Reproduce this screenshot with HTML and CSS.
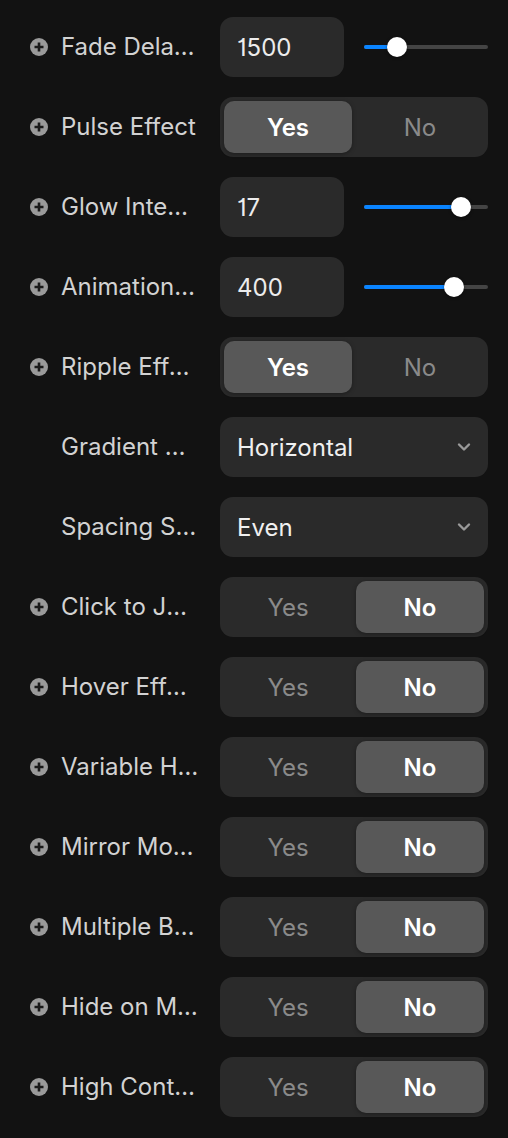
FILE: index.html
```html
<!DOCTYPE html>
<html>
<head>
<meta charset="utf-8">
<link rel="stylesheet" href="styles.css">
</head>
<body>
<div class="panel">
  <div class="row">
    <span class="add"><svg viewBox="0 0 18 18"><circle cx="9" cy="9" r="9" fill="#9a9a9a"/><path d="M9 4.5v9M4.5 9h9" stroke="#1a1a1a" stroke-width="2.6"/></svg></span>
    <span class="label">Fade Delay (ms)</span>
    <div class="ctrl num-slider">
      <div class="input">1500</div>
      <div class="slider"><div class="fill" style="width:33px"></div><div class="thumb" style="left:33px"></div></div>
    </div>
  </div>
  <div class="row">
    <span class="add"><svg viewBox="0 0 18 18"><circle cx="9" cy="9" r="9" fill="#9a9a9a"/><path d="M9 4.5v9M4.5 9h9" stroke="#1a1a1a" stroke-width="2.6"/></svg></span>
    <span class="label">Pulse Effect</span>
    <div class="ctrl toggle"><span class="seg on">Yes</span><span class="seg">No</span></div>
  </div>
  <div class="row">
    <span class="add"><svg viewBox="0 0 18 18"><circle cx="9" cy="9" r="9" fill="#9a9a9a"/><path d="M9 4.5v9M4.5 9h9" stroke="#1a1a1a" stroke-width="2.6"/></svg></span>
    <span class="label">Glow Intensity</span>
    <div class="ctrl num-slider">
      <div class="input">17</div>
      <div class="slider"><div class="fill" style="width:97px"></div><div class="thumb" style="left:97px"></div></div>
    </div>
  </div>
  <div class="row">
    <span class="add"><svg viewBox="0 0 18 18"><circle cx="9" cy="9" r="9" fill="#9a9a9a"/><path d="M9 4.5v9M4.5 9h9" stroke="#1a1a1a" stroke-width="2.6"/></svg></span>
    <span class="label">Animation Speed</span>
    <div class="ctrl num-slider">
      <div class="input">400</div>
      <div class="slider"><div class="fill" style="width:90px"></div><div class="thumb" style="left:90px"></div></div>
    </div>
  </div>
  <div class="row">
    <span class="add"><svg viewBox="0 0 18 18"><circle cx="9" cy="9" r="9" fill="#9a9a9a"/><path d="M9 4.5v9M4.5 9h9" stroke="#1a1a1a" stroke-width="2.6"/></svg></span>
    <span class="label">Ripple Effect</span>
    <div class="ctrl toggle"><span class="seg on">Yes</span><span class="seg">No</span></div>
  </div>
  <div class="row">
    <span class="add blank"></span>
    <span class="label">Gradient Direction</span>
    <div class="ctrl select"><span>Horizontal</span><svg class="chev" viewBox="0 0 14 10"><path d="M2 2.5l5 5 5-5" fill="none" stroke="#9a9a9a" stroke-width="2.4" stroke-linecap="round" stroke-linejoin="round"/></svg></div>
  </div>
  <div class="row">
    <span class="add blank"></span>
    <span class="label">Spacing Style</span>
    <div class="ctrl select"><span>Even</span><svg class="chev" viewBox="0 0 14 10"><path d="M2 2.5l5 5 5-5" fill="none" stroke="#9a9a9a" stroke-width="2.4" stroke-linecap="round" stroke-linejoin="round"/></svg></div>
  </div>
  <div class="row">
    <span class="add"><svg viewBox="0 0 18 18"><circle cx="9" cy="9" r="9" fill="#9a9a9a"/><path d="M9 4.5v9M4.5 9h9" stroke="#1a1a1a" stroke-width="2.6"/></svg></span>
    <span class="label">Click to Jump</span>
    <div class="ctrl toggle"><span class="seg">Yes</span><span class="seg on">No</span></div>
  </div>
  <div class="row">
    <span class="add"><svg viewBox="0 0 18 18"><circle cx="9" cy="9" r="9" fill="#9a9a9a"/><path d="M9 4.5v9M4.5 9h9" stroke="#1a1a1a" stroke-width="2.6"/></svg></span>
    <span class="label">Hover Effect</span>
    <div class="ctrl toggle"><span class="seg">Yes</span><span class="seg on">No</span></div>
  </div>
  <div class="row">
    <span class="add"><svg viewBox="0 0 18 18"><circle cx="9" cy="9" r="9" fill="#9a9a9a"/><path d="M9 4.5v9M4.5 9h9" stroke="#1a1a1a" stroke-width="2.6"/></svg></span>
    <span class="label">Variable Height</span>
    <div class="ctrl toggle"><span class="seg">Yes</span><span class="seg on">No</span></div>
  </div>
  <div class="row">
    <span class="add"><svg viewBox="0 0 18 18"><circle cx="9" cy="9" r="9" fill="#9a9a9a"/><path d="M9 4.5v9M4.5 9h9" stroke="#1a1a1a" stroke-width="2.6"/></svg></span>
    <span class="label">Mirror Mode</span>
    <div class="ctrl toggle"><span class="seg">Yes</span><span class="seg on">No</span></div>
  </div>
  <div class="row">
    <span class="add"><svg viewBox="0 0 18 18"><circle cx="9" cy="9" r="9" fill="#9a9a9a"/><path d="M9 4.5v9M4.5 9h9" stroke="#1a1a1a" stroke-width="2.6"/></svg></span>
    <span class="label">Multiple Bars</span>
    <div class="ctrl toggle"><span class="seg">Yes</span><span class="seg on">No</span></div>
  </div>
  <div class="row">
    <span class="add"><svg viewBox="0 0 18 18"><circle cx="9" cy="9" r="9" fill="#9a9a9a"/><path d="M9 4.5v9M4.5 9h9" stroke="#1a1a1a" stroke-width="2.6"/></svg></span>
    <span class="label">Hide on Mobile</span>
    <div class="ctrl toggle"><span class="seg">Yes</span><span class="seg on">No</span></div>
  </div>
  <div class="row">
    <span class="add"><svg viewBox="0 0 18 18"><circle cx="9" cy="9" r="9" fill="#9a9a9a"/><path d="M9 4.5v9M4.5 9h9" stroke="#1a1a1a" stroke-width="2.6"/></svg></span>
    <span class="label">High Contrast</span>
    <div class="ctrl toggle"><span class="seg">Yes</span><span class="seg on">No</span></div>
  </div>
</div>
</body>
</html>
```
FILE: styles.css
```css
html, body {
  margin: 0;
  padding: 0;
  background: #121212;
}
body {
  font-family: Inter, "Noto Sans", sans-serif;
  font-size: 24px;
  color: #d4d4d4;
  font-feature-settings: "cv01";
}
.panel {
  display: flex;
  flex-direction: column;
  gap: 20px;
  padding: 17px 20px 21px 30px;
}
.row {
  display: flex;
  align-items: center;
  height: 60px;
}
.add {
  width: 18px;
  height: 18px;
  flex: none;
  display: flex;
}
.add svg {
  width: 18px;
  height: 18px;
}
.label {
  width: 138px;
  margin-left: 13px;
  margin-right: 21px;
  white-space: nowrap;
  overflow: hidden;
  text-overflow: ellipsis;
  color: #d2d2d2;
  line-height: 30px;
}
.ctrl {
  width: 268px;
  height: 60px;
  flex: none;
  box-sizing: border-box;
}
.num-slider {
  display: flex;
  align-items: center;
  gap: 20px;
}
.input {
  width: 124px;
  height: 60px;
  background: #2a2a2a;
  border-radius: 13px;
  box-sizing: border-box;
  padding-left: 17px;
  display: flex;
  align-items: center;
  color: #ececec;
}
.slider {
  position: relative;
  flex: 1;
  height: 4px;
  border-radius: 2px;
  background: #444;
}
.fill {
  position: absolute;
  left: 0;
  top: 0;
  height: 4px;
  border-radius: 2px;
  background: #0a84ff;
}
.thumb {
  position: absolute;
  top: -8px;
  width: 20px;
  height: 20px;
  margin-left: -10px;
  border-radius: 50%;
  background: #fff;
  box-shadow: 0 1px 3px rgba(0,0,0,0.5);
}
.toggle {
  background: #2a2a2a;
  border-radius: 13px;
  padding: 4px;
  display: flex;
  gap: 4px;
}
.seg {
  flex: 1;
  display: flex;
  align-items: center;
  justify-content: center;
  border-radius: 10px;
  color: #8a8a8a;
}
.seg.on {
  background: #585858;
  color: #fff;
  font-weight: 600;
  box-shadow: 0 1px 4px rgba(0,0,0,0.35);
}
.select {
  background: #2a2a2a;
  border-radius: 13px;
  display: flex;
  align-items: center;
  justify-content: space-between;
  padding: 0 17px 0 17px;
  color: #f0f0f0;
}
.chev {
  width: 14px;
  height: 10px;
}
```
